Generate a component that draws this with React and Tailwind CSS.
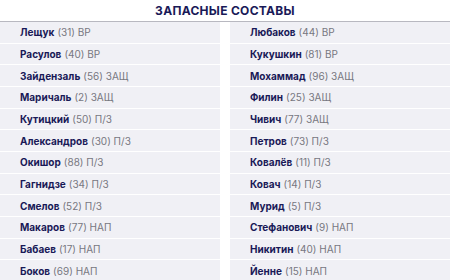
const LEFT = [
  ['Лещук', 31, 'ВР'],
  ['Расулов', 40, 'ВР'],
  ['Зайдензаль', 56, 'ЗАЩ'],
  ['Маричаль', 2, 'ЗАЩ'],
  ['Кутицкий', 50, 'П/З'],
  ['Александров', 30, 'П/З'],
  ['Окишор', 88, 'П/З'],
  ['Гагнидзе', 34, 'П/З'],
  ['Смелов', 52, 'П/З'],
  ['Макаров', 77, 'НАП'],
  ['Бабаев', 17, 'НАП'],
  ['Боков', 69, 'НАП'],
]

const RIGHT = [
  ['Любаков', 44, 'ВР'],
  ['Кукушкин', 81, 'ВР'],
  ['Мохаммад', 96, 'ЗАЩ'],
  ['Филин', 25, 'ЗАЩ'],
  ['Чивич', 77, 'ЗАЩ'],
  ['Петров', 73, 'П/З'],
  ['Ковалёв', 11, 'П/З'],
  ['Ковач', 14, 'П/З'],
  ['Мурид', 5, 'П/З'],
  ['Стефанович', 9, 'НАП'],
  ['Никитин', 40, 'НАП'],
  ['Йенне', 15, 'НАП'],
]

function Column({ players }) {
  return (
    <div className="flex-1 bg-[#f0f0f5]">
      {players.map(([name, num, pos]) => (
        <div
          key={name}
          className="h-[21.67px] flex items-center pl-5 border-b border-white text-[10px] leading-none whitespace-nowrap"
        >
          <span className="font-bold text-[#191957]">{name}</span>
          <span className="ml-[3px] text-[#77777f]">({num}) {pos}</span>
        </div>
      ))}
    </div>
  )
}

export default function App() {
  return (
    <div className="w-[450px] h-[280px] overflow-hidden bg-white font-['Inter',sans-serif]">
      <h2 className="h-[21px] flex items-center justify-center text-[12px] font-bold text-[#191957] tracking-[0.3px]">
        ЗАПАСНЫЕ СОСТАВЫ
      </h2>
      <div className="flex gap-[10px] border-t border-[#b8b8c0]">
        <Column players={LEFT} />
        <Column players={RIGHT} />
      </div>
    </div>
  )
}
